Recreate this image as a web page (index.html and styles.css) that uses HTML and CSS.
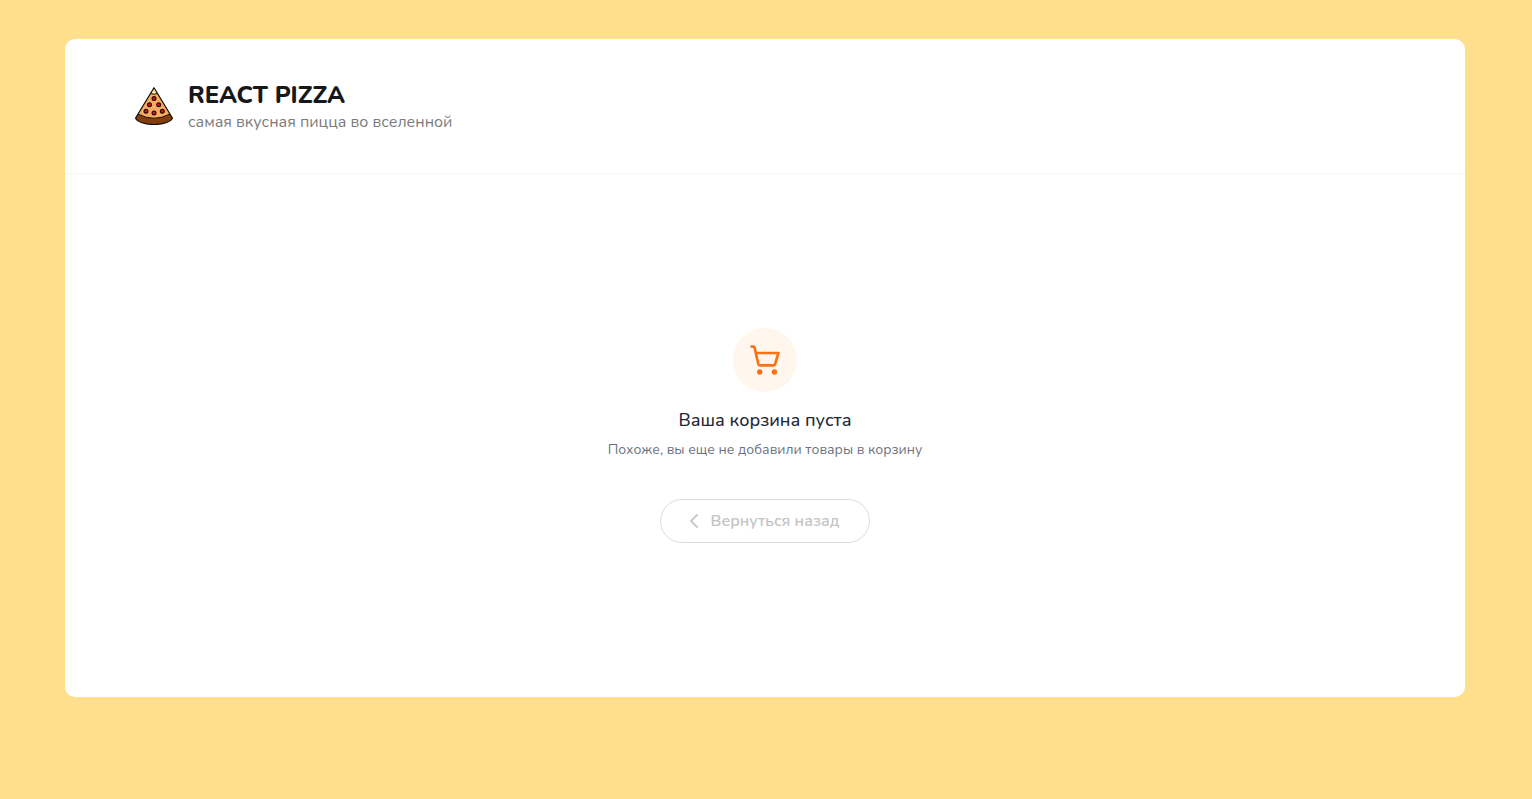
FILE: index.html
```html
<!DOCTYPE html>
<html lang="ru">
<head>
	<meta charset="UTF-8">
	<meta name="viewport" content="width=device-width, initial-scale=1">
	<title>React Pizza</title>
	<link rel="stylesheet" href="styles.css">
</head>
<body>
	<div class="wrapper">
		<header class="header">
			<a href="#" class="logo">
				<svg class="logo-img" viewBox="0 0 38 38" aria-hidden="true">
					<path d="M19 .7 L37.400 31 Q37 33.500 31 35.700 Q19 39.300 7 35.700 Q1 33.500 .6 31 Z" fill="#843d0b"/>
					<path d="M19 .7 L35 27 Q19 35.500 3 27 Z" fill="#f5ac60"/>
					<path d="M19 .7 L22.500 6.500 Q19 8 15.500 6.500 Z" fill="#fbe6a0"/>
					<path d="M15.500 6.500 Q19 8 22.500 6.500 M3 27 Q19 35.500 35 27" fill="none" stroke="#1a1005" stroke-width="1"/>
					<path d="M19 .7 L37.400 31 Q37 33.500 31 35.700 Q19 39.300 7 35.700 Q1 33.500 .6 31 Z" fill="none" stroke="#110b06" stroke-width="1.200" stroke-linejoin="round"/>
					<g fill="#dc1408" stroke="#2a0b06" stroke-width="1.200">
						<circle cx="19" cy="11.500" r="1.900"/>
						<circle cx="14.500" cy="17.700" r="1.900"/>
						<circle cx="23.700" cy="17.700" r="1.900"/>
						<circle cx="11" cy="24.300" r="1.900"/>
						<circle cx="19" cy="26" r="1.900"/>
						<circle cx="27.300" cy="24.300" r="1.900"/>
					</g>
				</svg>
				<div>
					<h1 class="logo-title">REACT PIZZA</h1>
					<p class="logo-text">самая вкусная пицца во вселенной</p>
				</div>
			</a>
		</header>
		<main class="cart-empty">
			<div class="cart-icon">
				<svg width="32" height="32" viewBox="0 0 32 32" aria-hidden="true">
					<path d="M2.600 2.600 H4.300 Q5.300 2.600 5.600 3.700 L9.300 19.800 Q9.700 21.300 11.200 21.300 H24.300 Q25.800 21.300 26.200 19.800 L29.400 9 H6.900" fill="none" stroke="#f97316" stroke-width="2.700" stroke-linecap="round" stroke-linejoin="round"/>
					<circle cx="10.700" cy="28" r="2.700" fill="#f97316"/>
					<circle cx="25.400" cy="28" r="2.700" fill="#f97316"/>
				</svg>
			</div>
			<h2 class="cart-title">Ваша корзина пуста</h2>
			<p class="cart-text">Похоже, вы еще не добавили товары в корзину</p>
			<a href="#" class="go-back">
				<svg width="8" height="14" viewBox="0 0 8 14" aria-hidden="true">
					<path d="M7 1 L1 7 L7 13" fill="none" stroke="#cacaca" stroke-width="2" stroke-linecap="round" stroke-linejoin="round"/>
				</svg>
				<span>Вернуться назад</span>
			</a>
		</main>
	</div>
</body>
</html>
```

FILE: styles.css
```css
* {
	box-sizing: border-box;
	margin: 0;
	padding: 0;
}

body {
	padding: 39px 67px 39px 65px;
	background: #ffdf8c;
	font-family: Nunito, "Open Sans", "Noto Sans", sans-serif;
}

a {
	color: inherit;
	text-decoration: none;
}

.wrapper {
	max-width: 1400px;
	margin: 0 auto;
	background: #fff;
	border-radius: 10px;
}

/* header */
.header {
	padding: 40px 70px;
	border-bottom: 1px solid #f6f6f6;
}

.logo {
	display: inline-flex;
	align-items: center;
	gap: 15px;
}

.logo-img {
	width: 38px;
	height: 38px;
}

.logo-title {
	font-size: 24px;
	line-height: 32px;
	font-weight: 800;
	color: #181818;
}

.logo-text {
	font-size: 16px;
	line-height: 22px;
	color: #7b7b7b;
}

/* empty cart */
.cart-empty {
	display: flex;
	flex-direction: column;
	align-items: center;
	padding: 154px 20px;
	text-align: center;
}

.cart-icon {
	display: flex;
	align-items: center;
	justify-content: center;
	width: 64px;
	height: 64px;
	margin-bottom: 16px;
	border-radius: 50%;
	background: #fff7ed;
}

.cart-title {
	margin-bottom: 8px;
	font-size: 18px;
	line-height: 24px;
	font-weight: 500;
	color: #1f2937;
}

.cart-text {
	margin-bottom: 39px;
	font-size: 14px;
	line-height: 20px;
	color: #6b7280;
}

.go-back {
	display: flex;
	align-items: center;
	justify-content: center;
	gap: 12px;
	min-width: 210px;
	height: 44px;
	padding: 0 28px;
	border: 1px solid #dcdcdc;
	border-radius: 30px;
	font-size: 16px;
	font-weight: 600;
	color: #c4c4c4;
}
```
